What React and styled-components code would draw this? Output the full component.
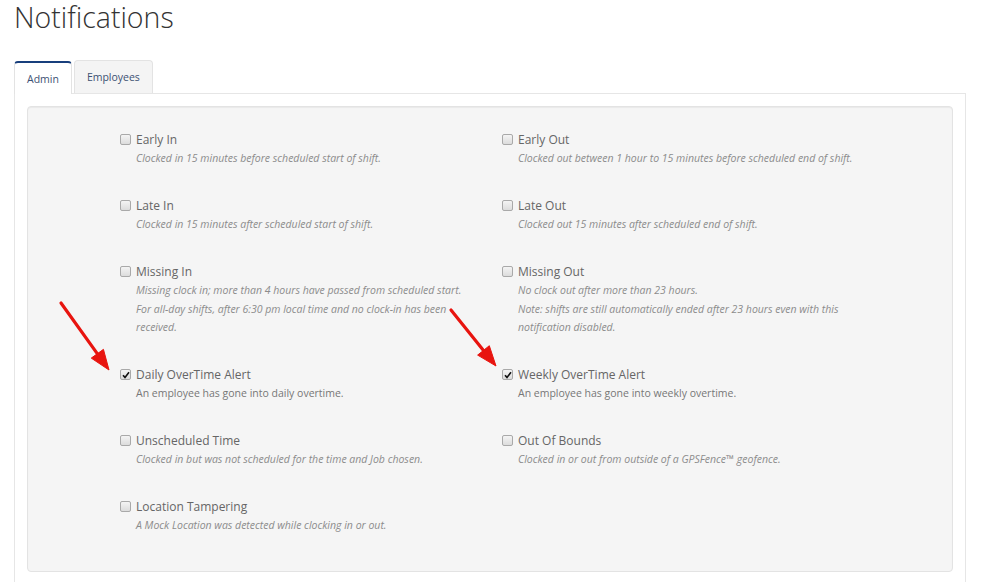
import React from 'react'
import styled, { createGlobalStyle } from 'styled-components'

const GlobalStyle = createGlobalStyle`
    html, body {
        margin: 0;
        padding: 0;
        background: #ffffff;
        overflow: hidden;
    }
    body {
        font-family: "Open Sans", "Liberation Sans", Arial, sans-serif;
    }
`

const Page = styled.div`
    position: relative;
    padding: 0 34px 0 14px;
    height: 582px;
`

const Title = styled.h1`
    margin: 2px 0 28px;
    font-size: 28.5px;
    line-height: 30px;
    font-weight: 300;
    color: #333333;
`

const TabBar = styled.div`
    display: flex;
    gap: 2px;
    align-items: flex-end;
`

const Tab = styled.div`
    height: 33px;
    box-sizing: border-box;
    padding: 0 12px;
    display: flex;
    align-items: center;
    font-size: 10.5px;
    color: #3c5173;
    border: 1px solid #e3e3e3;
    border-bottom: none;
    border-radius: 4px 4px 0 0;
    background: ${p => (p.active ? '#ffffff' : '#f4f4f4')};
    border-top: ${p => (p.active ? '2px solid #183f7c' : '1px solid #e3e3e3')};
    margin-bottom: ${p => (p.active ? '-1px' : '0')};
    position: relative;
    z-index: 1;
`

const TabContent = styled.div`
    border: 1px solid #e6e6e6;
    padding: 12px;
    background: #ffffff;
`

const Well = styled.div`
    background: #f5f5f5;
    border: 1px solid #e3e3e3;
    border-radius: 4px;
    box-shadow: inset 0 1px 1px rgba(0, 0, 0, 0.05);
    padding: 23px 0 8px 92px;
    display: grid;
    grid-template-columns: 382px 382px;
    align-items: start;
`

const Item = styled.div`
    display: grid;
    grid-template-columns: 16px 340px;
    margin-bottom: 28.5px;
`

const Box = styled.span`
    width: 11px;
    height: 11px;
    box-sizing: border-box;
    margin-top: 4px;
    border: 1px solid #a9a9a9;
    border-radius: 2px;
    background: linear-gradient(#f4f4f4, #dcdcdc);
    display: flex;
    align-items: center;
    justify-content: center;

    svg {
        display: block;
    }
`

const Label = styled.div`
    font-size: 12px;
    line-height: 19px;
    color: #666666;
`

const Desc = styled.div`
    font-size: 10.5px;
    line-height: 18.5px;
    color: ${p => (p.plain ? '#777777' : '#8c8c8c')};
    font-style: ${p => (p.plain ? 'normal' : 'italic')};
`

const Arrows = styled.svg`
    position: absolute;
    left: 0;
    top: 0;
    pointer-events: none;
`

const left = [
    { label: 'Early In', desc: ['Clocked in 15 minutes before scheduled start of shift.'] },
    { label: 'Late In', desc: ['Clocked in 15 minutes after scheduled start of shift.'] },
    {
        label: 'Missing In',
        desc: [
            'Missing clock in; more than 4 hours have passed from scheduled start.',
            'For all-day shifts, after 6:30 pm local time and no clock-in has been received.',
        ],
    },
    { label: 'Daily OverTime Alert', desc: ['An employee has gone into daily overtime.'], checked: true, plain: true },
    { label: 'Unscheduled Time', desc: ['Clocked in but was not scheduled for the time and Job chosen.'] },
    { label: 'Location Tampering', desc: ['A Mock Location was detected while clocking in or out.'] },
]

const right = [
    { label: 'Early Out', desc: ['Clocked out between 1 hour to 15 minutes before scheduled end of shift.'] },
    { label: 'Late Out', desc: ['Clocked out 15 minutes after scheduled end of shift.'] },
    {
        label: 'Missing Out',
        desc: [
            'No clock out after more than 23 hours.',
            'Note: shifts are still automatically ended after 23 hours even with this notification disabled.',
        ],
    },
    { label: 'Weekly OverTime Alert', desc: ['An employee has gone into weekly overtime.'], checked: true, plain: true },
    { label: 'Out Of Bounds', desc: ['Clocked in or out from outside of a GPSFence™ geofence.'] },
]

const Check = ({ checked }) => (
    <Box>
        {checked && (
            <svg width="8" height="8" viewBox="0 0 8 8">
                <path d="M1 4.2 L3 6.4 L7 1.2" fill="none" stroke="#111" strokeWidth="1.6" />
            </svg>
        )}
    </Box>
)

const Notification = ({ item }) => (
    <Item>
        <Check checked={item.checked} />
        <div>
            <Label>{item.label}</Label>
            {item.desc.map(d => (
                <Desc key={d} plain={item.plain}>{d}</Desc>
            ))}
        </div>
    </Item>
)

const Arrow = ({ x1, y1, x2, y2 }) => {
    const dx = x2 - x1
    const dy = y2 - y1
    const len = Math.hypot(dx, dy)
    const ux = dx / len
    const uy = dy / len
    const bx = x2 - ux * 20
    const by = y2 - uy * 20
    const px = -uy * 7.5
    const py = ux * 7.5
    return (
        <g fill="#e8140f" stroke="#e8140f">
            <line x1={x1} y1={y1} x2={bx + ux * 2} y2={by + uy * 2} strokeWidth="3.2" strokeLinecap="round" />
            <polygon points={`${x2},${y2} ${bx + px},${by + py} ${bx - px},${by - py}`} strokeWidth="1" />
        </g>
    )
}

const App = () => (
    <Page>
        <GlobalStyle />
        <Title>Notifications</Title>
        <TabBar>
            <Tab active>Admin</Tab>
            <Tab>Employees</Tab>
        </TabBar>
        <TabContent>
            <Well>
                <div>
                    {left.map(item => (
                        <Notification key={item.label} item={item} />
                    ))}
                </div>
                <div>
                    {right.map(item => (
                        <Notification key={item.label} item={item} />
                    ))}
                </div>
            </Well>
        </TabContent>
        <Arrows width="1000" height="582">
            <Arrow x1={61} y1={301} x2={109} y2={368} />
            <Arrow x1={451} y1={308} x2={496} y2={364} />
        </Arrows>
    </Page>
)

export default App
